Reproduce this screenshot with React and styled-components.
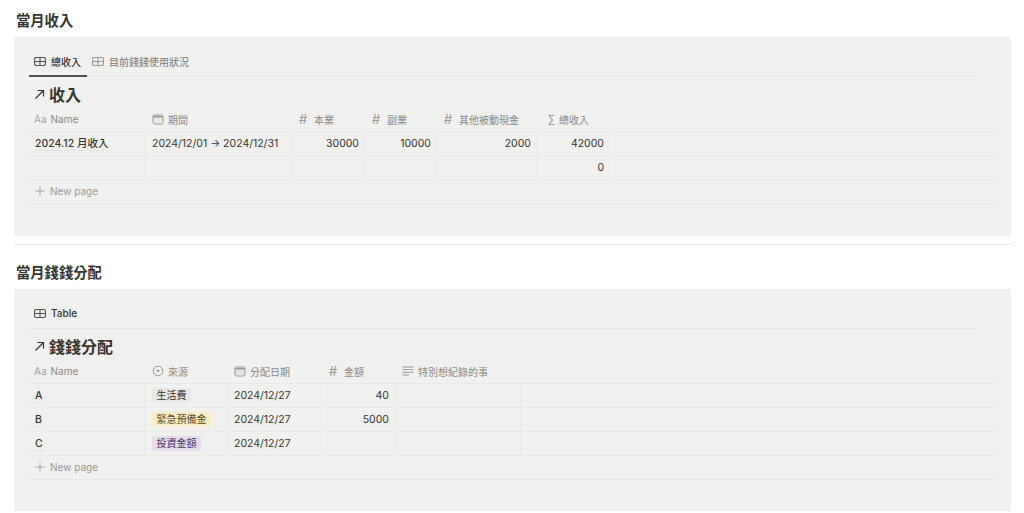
import React from 'react';
import styled, { createGlobalStyle } from 'styled-components';

const GlobalStyle = createGlobalStyle`
  html, body {
    margin: 0;
    padding: 0;
    background: #fff;
    font-family: Inter, "Noto Sans CJK TC", sans-serif;
    color: #37352f;
  }
`;

const Page = styled.div`
  box-sizing: border-box;
  width: 1024px;
  height: 513px;
  overflow: hidden;
  padding: 13px 13px 0 14px;
`;

const SectionTitle = styled.h2`
  margin: 0;
  height: 24px;
  line-height: 16px;
  padding-left: 2px;
  font-size: 14.3px;
  font-weight: 600;
  color: #37352f;
`;

const Panel = styled.div`
  box-sizing: border-box;
  height: ${(p) => p.$height}px;
  padding: 8px 12px 0 15px;
  background: #f0f0ef;
  border-radius: 2px;
`;

const Divider = styled.div`
  height: 1px;
  margin: 8px 0 20px;
  background: #ededec;
`;

const Tabs = styled.div`
  display: flex;
  margin-right: 23px;
  height: 32px;
  box-sizing: border-box;
  border-bottom: 1px solid #e9e9e7;
`;

const Tab = styled.div`
  position: relative;
  display: flex;
  align-items: center;
  gap: 5px;
  padding: 1px 6px 0 5px;
  font-size: 10px;
  font-weight: ${(p) => (p.$active ? 500 : 400)};
  color: ${(p) => (p.$active ? '#37352f' : '#787774')};

  ${(p) =>
    p.$active &&
    `&::after {
      content: '';
      position: absolute;
      left: 0;
      right: 0;
      bottom: -1px;
      height: 2px;
      background: #55534e;
    }`}
`;

const TabLabel = styled.span`
  font-weight: 500;
  color: #37352f;
`;

const DbTitle = styled.div`
  display: flex;
  align-items: center;
  gap: 3px;
  box-sizing: border-box;
  height: 31px;
  padding: 3px 0 0 5px;
  font-size: 16px;
  font-weight: 600;
  color: #37352f;
`;

const Row = styled.div`
  display: grid;
  grid-template-columns: ${(p) => p.$columns};
  height: 24px;
  box-sizing: border-box;
  border-bottom: 1px solid #e9e9e7;
`;

const HeadCell = styled.div`
  display: flex;
  align-items: center;
  gap: 4px;
  padding: 0 7px 1px;
  font-size: 10px;
  color: #8a8985;
  white-space: nowrap;

  &:first-child {
    padding-left: 5px;
  }
`;

const Cell = styled.div`
  box-sizing: border-box;
  display: flex;
  align-items: center;
  justify-content: ${(p) => (p.$number ? 'flex-end' : 'flex-start')};
  padding: 0 5px 0 7px;
  font-size: 10.5px;
  font-weight: ${(p) => (p.$name ? 500 : 400)};
  color: #37352f;
  white-space: nowrap;
  border-right: 1px solid #ebebea;

  &:first-child {
    padding-left: 6px;
  }
`;

const NameText = styled.span`
  border-bottom: 1px solid #e3e3e1;
  line-height: 13px;
`;

const Tag = styled.span`
  padding: 0 4.5px;
  height: 15px;
  line-height: 15px;
  border-radius: 3px;
  font-size: 10px;
  color: ${(p) => p.$color};
  background: ${(p) => p.$bg};
`;

const NewPage = styled.div`
  display: flex;
  align-items: center;
  gap: 5px;
  box-sizing: border-box;
  height: 24px;
  padding: 0 0 1px 6px;
  font-size: 10px;
  color: #9b9a97;
  border-bottom: 1px solid #e9e9e7;
`;

const Glyph = styled.span`
  width: 11px;
  display: inline-flex;
  justify-content: ${(p) => (p.$end ? 'flex-end' : 'flex-start')};
  font-size: ${(p) => p.$size || 11}px;
  color: #9b9a97;
`;

const AaGlyph = styled.span`
  font-size: 10px;
  color: #a5a4a0;
`;

const TableIcon = ({ color = '#55534e' }) => (
  <svg width="12" height="9" viewBox="0 0 12 9" fill="none" stroke={color} strokeWidth="1.1">
    <rect x="0.5" y="0.5" width="11" height="8" rx="2" />
    <path d="M0.5 4.5H11.5M6 0.5V8.5" />
  </svg>
);

const CalendarIcon = () => (
  <svg width="12" height="11" viewBox="0 0 12 11" fill="none" stroke="#9b9a97" strokeWidth="1">
    <rect x="1" y="1" width="10" height="9" rx="1.5" fill="#e6e6e4" />
    <path d="M1 2.7H11" strokeWidth="1.6" />
  </svg>
);

const SelectIcon = () => (
  <svg width="12" height="12" viewBox="0 0 12 12" fill="none" stroke="#9b9a97" strokeWidth="1">
    <circle cx="6" cy="6" r="4.8" />
    <path d="M4 5H8L6 7.6Z" fill="#9b9a97" stroke="none" />
  </svg>
);

const TextIcon = () => (
  <svg width="12" height="10" viewBox="0 0 12 10" fill="none" stroke="#9b9a97" strokeWidth="1">
    <path d="M0.5 1H11.5M0.5 3.7H11.5M0.5 6.4H11.5M0.5 9H7" />
  </svg>
);

const ArrowIcon = () => (
  <svg width="12" height="12" viewBox="0 0 12 12" fill="none" stroke="#37352f" strokeWidth="1.2">
    <path d="M1.5 10.5L9.5 2.5M3.5 2.5H9.5V8.5" />
  </svg>
);

const PlusIcon = () => (
  <svg width="10" height="10" viewBox="0 0 10 10" fill="none" stroke="#a5a4a0" strokeWidth="1">
    <path d="M5 0.5V9.5M0.5 5H9.5" />
  </svg>
);

const Hash = () => <Glyph $size={13}>#</Glyph>;

const incomeColumns = '116px 147px 73px 72px 100px 73px 1fr';
const splitColumns = '116px 82px 95px 73px 126px 1fr';

const App = () => (
  <Page>
    <GlobalStyle />
    <SectionTitle>當月收入</SectionTitle>
    <Panel $height={199}>
      <Tabs>
        <Tab $active>
          <TableIcon />
          總收入
        </Tab>
        <Tab>
          <TableIcon color="#9b9a97" />
          目前錢錢使用狀況
        </Tab>
      </Tabs>
      <DbTitle>
        <ArrowIcon />
        收入
      </DbTitle>
      <Row $columns={incomeColumns}>
        <HeadCell><AaGlyph>Aa</AaGlyph>Name</HeadCell>
        <HeadCell><CalendarIcon />期間</HeadCell>
        <HeadCell><Hash />本業</HeadCell>
        <HeadCell><Hash />副業</HeadCell>
        <HeadCell><Hash />其他被動現金</HeadCell>
        <HeadCell><Glyph $end>∑</Glyph>總收入</HeadCell>
      </Row>
      <Row $columns={incomeColumns}>
        <Cell $name><NameText>2024.12 月收入</NameText></Cell>
        <Cell>2024/12/01 → 2024/12/31</Cell>
        <Cell $number>30000</Cell>
        <Cell $number>10000</Cell>
        <Cell $number>2000</Cell>
        <Cell $number>42000</Cell>
      </Row>
      <Row $columns={incomeColumns}>
        <Cell />
        <Cell />
        <Cell />
        <Cell />
        <Cell />
        <Cell $number>0</Cell>
      </Row>
      <NewPage><PlusIcon />New page</NewPage>
    </Panel>
    <Divider />
    <SectionTitle>當月錢錢分配</SectionTitle>
    <Panel $height={222}>
      <Tabs>
        <Tab>
          <TableIcon />
          <TabLabel>Table</TabLabel>
        </Tab>
      </Tabs>
      <DbTitle>
        <ArrowIcon />
        錢錢分配
      </DbTitle>
      <Row $columns={splitColumns}>
        <HeadCell><AaGlyph>Aa</AaGlyph>Name</HeadCell>
        <HeadCell><SelectIcon />來源</HeadCell>
        <HeadCell><CalendarIcon />分配日期</HeadCell>
        <HeadCell><Hash />金額</HeadCell>
        <HeadCell><TextIcon />特別想紀錄的事</HeadCell>
      </Row>
      <Row $columns={splitColumns}>
        <Cell $name><NameText>A</NameText></Cell>
        <Cell><Tag $bg="#e8e8e6" $color="#37352f">生活費</Tag></Cell>
        <Cell>2024/12/27</Cell>
        <Cell $number>40</Cell>
        <Cell />
      </Row>
      <Row $columns={splitColumns}>
        <Cell $name><NameText>B</NameText></Cell>
        <Cell><Tag $bg="#fbecc8" $color="#5c4a1e">緊急預備金</Tag></Cell>
        <Cell>2024/12/27</Cell>
        <Cell $number>5000</Cell>
        <Cell />
      </Row>
      <Row $columns={splitColumns}>
        <Cell $name><NameText>C</NameText></Cell>
        <Cell><Tag $bg="#e5dcee" $color="#4a3560">投資金額</Tag></Cell>
        <Cell>2024/12/27</Cell>
        <Cell $number />
        <Cell />
      </Row>
      <NewPage><PlusIcon />New page</NewPage>
    </Panel>
  </Page>
);

export default App;
